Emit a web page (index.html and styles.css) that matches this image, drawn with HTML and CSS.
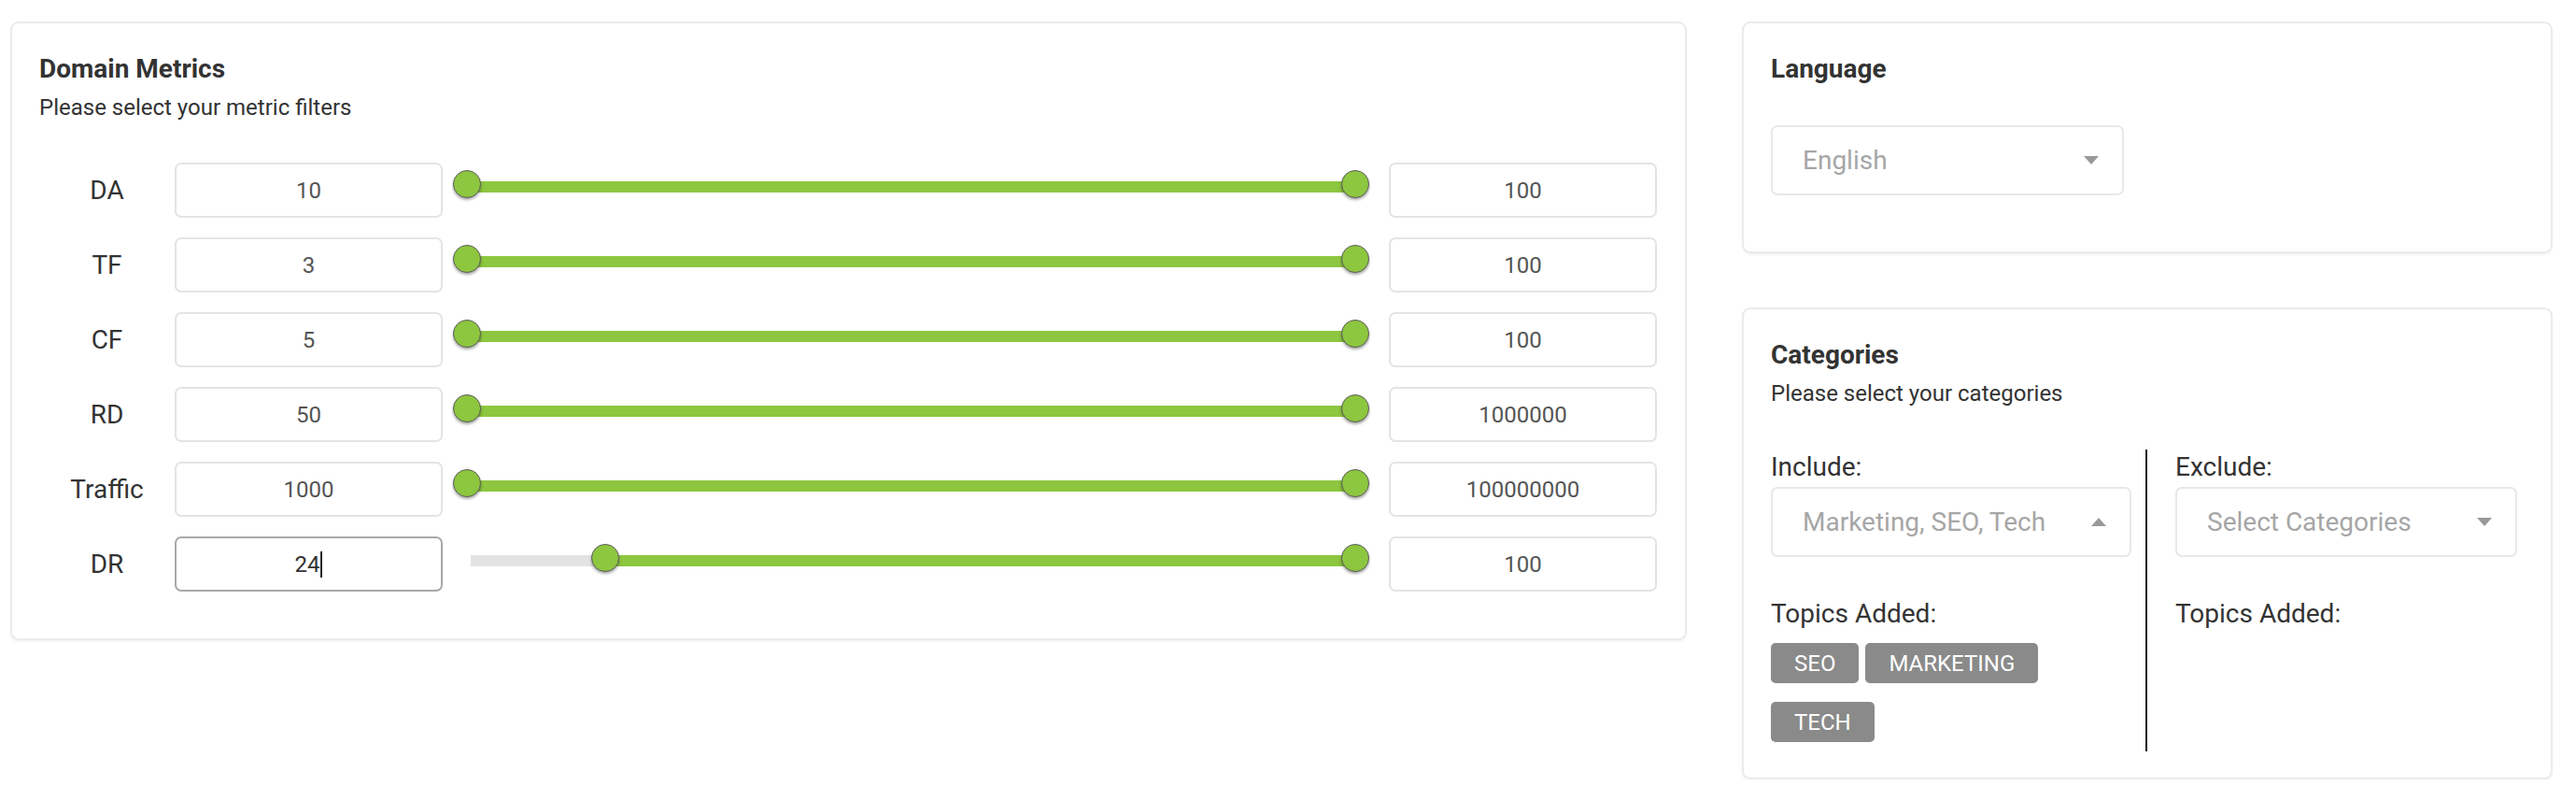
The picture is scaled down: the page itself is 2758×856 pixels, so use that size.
FILE: index.html
```html
<!DOCTYPE html>
<html lang="en">
<head>
<meta charset="utf-8">
<title>Filters</title>
<link rel="stylesheet" href="styles.css">
</head>
<body>
<div class="page">
  <section class="card metrics">
    <h2 class="card-title">Domain Metrics</h2>
    <p class="card-sub">Please select your metric filters</p>
    <div class="rows">
      <div class="row">
        <div class="label">DA</div>
        <div class="field">10</div>
        <div class="slider"><div class="track"><div class="fill" style="left:0%;right:0%"></div><span class="thumb" style="left:0%"></span><span class="thumb" style="left:100%"></span></div></div>
        <div class="field">100</div>
      </div>
      <div class="row">
        <div class="label">TF</div>
        <div class="field">3</div>
        <div class="slider"><div class="track"><div class="fill" style="left:0%;right:0%"></div><span class="thumb" style="left:0%"></span><span class="thumb" style="left:100%"></span></div></div>
        <div class="field">100</div>
      </div>
      <div class="row">
        <div class="label">CF</div>
        <div class="field">5</div>
        <div class="slider"><div class="track"><div class="fill" style="left:0%;right:0%"></div><span class="thumb" style="left:0%"></span><span class="thumb" style="left:100%"></span></div></div>
        <div class="field">100</div>
      </div>
      <div class="row">
        <div class="label">RD</div>
        <div class="field">50</div>
        <div class="slider"><div class="track"><div class="fill" style="left:0%;right:0%"></div><span class="thumb" style="left:0%"></span><span class="thumb" style="left:100%"></span></div></div>
        <div class="field">1000000</div>
      </div>
      <div class="row">
        <div class="label">Traffic</div>
        <div class="field">1000</div>
        <div class="slider"><div class="track"><div class="fill" style="left:0%;right:0%"></div><span class="thumb" style="left:0%"></span><span class="thumb" style="left:100%"></span></div></div>
        <div class="field">100000000</div>
      </div>
      <div class="row">
        <div class="label">DR</div>
        <div class="field focused">24<span class="caret"></span></div>
        <div class="slider"><div class="track"><div class="fill" style="left:15.6%;right:0%"></div><span class="thumb" style="left:15.6%"></span><span class="thumb" style="left:100%"></span></div></div>
        <div class="field">100</div>
      </div>
    </div>
  </section>

  <div class="side">
    <section class="card language">
      <h2 class="card-title">Language</h2>
      <div class="select lang-select">
        <span class="select-text">English</span>
        <span class="arrow-down"></span>
      </div>
    </section>

    <section class="card categories">
      <h2 class="card-title">Categories</h2>
      <p class="card-sub">Please select your categories</p>
      <div class="cat-cols">
        <div class="cat-col include">
          <div class="cat-label">Include:</div>
          <div class="select inc-select">
            <span class="select-text">Marketing, SEO, Tech</span>
            <span class="arrow-up"></span>
          </div>
          <div class="cat-label topics">Topics Added:</div>
          <div class="chips">
            <span class="chip">SEO</span>
            <span class="chip">MARKETING</span>
            <span class="chip">TECH</span>
          </div>
        </div>
        <div class="cat-col exclude">
          <div class="cat-label">Exclude:</div>
          <div class="select exc-select">
            <span class="select-text">Select Categories</span>
            <span class="arrow-down"></span>
          </div>
          <div class="cat-label topics">Topics Added:</div>
        </div>
      </div>
    </section>
  </div>
</div>
</body>
</html>
```

FILE: styles.css
```css
* { box-sizing: border-box; }

html, body {
  margin: 0;
  padding: 0;
  background: #ffffff;
}

body {
  font-family: Roboto, "Liberation Sans", Arial, sans-serif;
  color: #333333;
}

.page {
  display: flex;
  align-items: flex-start;
  gap: 59px;
  padding: 23px 25px 0 11px;
}

.card {
  border: 2px solid #ebebeb;
  border-radius: 9px;
  background: #fff;
  box-shadow: 0 2px 2px rgba(0, 0, 0, 0.05);
  padding: 32px 30px 0 29px;
}

.card-title {
  margin: 0;
  font-size: 28px;
  line-height: 33px;
  font-weight: 700;
  color: #333;
}

.card-sub {
  margin: 11.5px 0 0;
  font-size: 24px;
  line-height: 27px;
  font-weight: 400;
  color: #333;
}

/* ---------- Domain metrics ---------- */
.metrics {
  flex: 0 0 1795px;
  height: 662px;
}

.rows {
  margin-top: 45.5px;
  display: flex;
  flex-direction: column;
  gap: 21px;
}

.row {
  display: grid;
  grid-template-columns: 145px 287px 1fr 287px;
  height: 59px;
  align-items: center;
}

.label {
  text-align: center;
  font-size: 28px;
  color: #333;
}

.field {
  height: 59px;
  border: 2px solid #e4e4e4;
  border-radius: 7px;
  display: flex;
  align-items: center;
  justify-content: center;
  font-size: 24px;
  color: #555;
}

.field.focused {
  border-color: #a8a8a8;
  color: #333;
}

.caret {
  display: inline-block;
  width: 2px;
  height: 28px;
  background: #222;
  margin-left: 1px;
}

.slider {
  height: 59px;
  padding: 0 32px 7px 30px;
  display: flex;
  align-items: center;
}

.track {
  position: relative;
  width: 100%;
  height: 12px;
  background: #e3e3e3;
}

.fill {
  position: absolute;
  top: 0;
  bottom: 0;
  background: #8dc63f;
}

.thumb {
  position: absolute;
  top: 50%;
  width: 30px;
  height: 30px;
  margin: -18px 0 0 -19px;
  border-radius: 50%;
  background: #8dc63f;
  border: 1.5px solid #5d5d5d;
  box-shadow: 0 2px 3px rgba(0, 0, 0, 0.35);
}

/* ---------- Side column ---------- */
.side {
  flex: 0 0 868px;
  display: flex;
  flex-direction: column;
  gap: 58px;
}

.language {
  height: 248px;
}

.select {
  height: 75px;
  border: 2px solid #e8e8e8;
  border-radius: 7px;
  display: flex;
  align-items: center;
  justify-content: space-between;
  padding: 0 25px 0 32px;
}

.select-text {
  font-size: 28px;
  color: #a6a6a6;
}

.lang-select {
  width: 378px;
  margin-top: 44px;
}

.arrow-down {
  width: 0;
  height: 0;
  border-left: 8px solid transparent;
  border-right: 8px solid transparent;
  border-top: 9px solid #999;
}

.arrow-up {
  width: 0;
  height: 0;
  border-left: 8px solid transparent;
  border-right: 8px solid transparent;
  border-bottom: 9px solid #999;
}

.categories {
  height: 505px;
}

.cat-cols {
  margin-top: 46.5px;
  display: grid;
  grid-template-columns: 403px 1fr;
}

.cat-col {
  height: 323px;
  padding-top: 2px;
}

.cat-col.include {
  border-right: 2px solid #111;
}

.cat-col.exclude {
  padding-left: 30px;
}

.cat-label {
  font-size: 28px;
  line-height: 33px;
  color: #333;
}

.inc-select {
  width: 386px;
  margin-top: 5px;
}

.exc-select {
  width: 366px;
  margin-top: 5px;
}

.cat-label.topics {
  margin-top: 44px;
}

.chips {
  margin-top: 15px;
  max-width: 386px;
  display: flex;
  flex-wrap: wrap;
  gap: 20px 7px;
}

.chip {
  height: 43px;
  padding: 0 25px;
  display: inline-flex;
  align-items: center;
  background: #8a8a8a;
  color: #fff;
  border-radius: 5px;
  font-size: 24px;
}
```
